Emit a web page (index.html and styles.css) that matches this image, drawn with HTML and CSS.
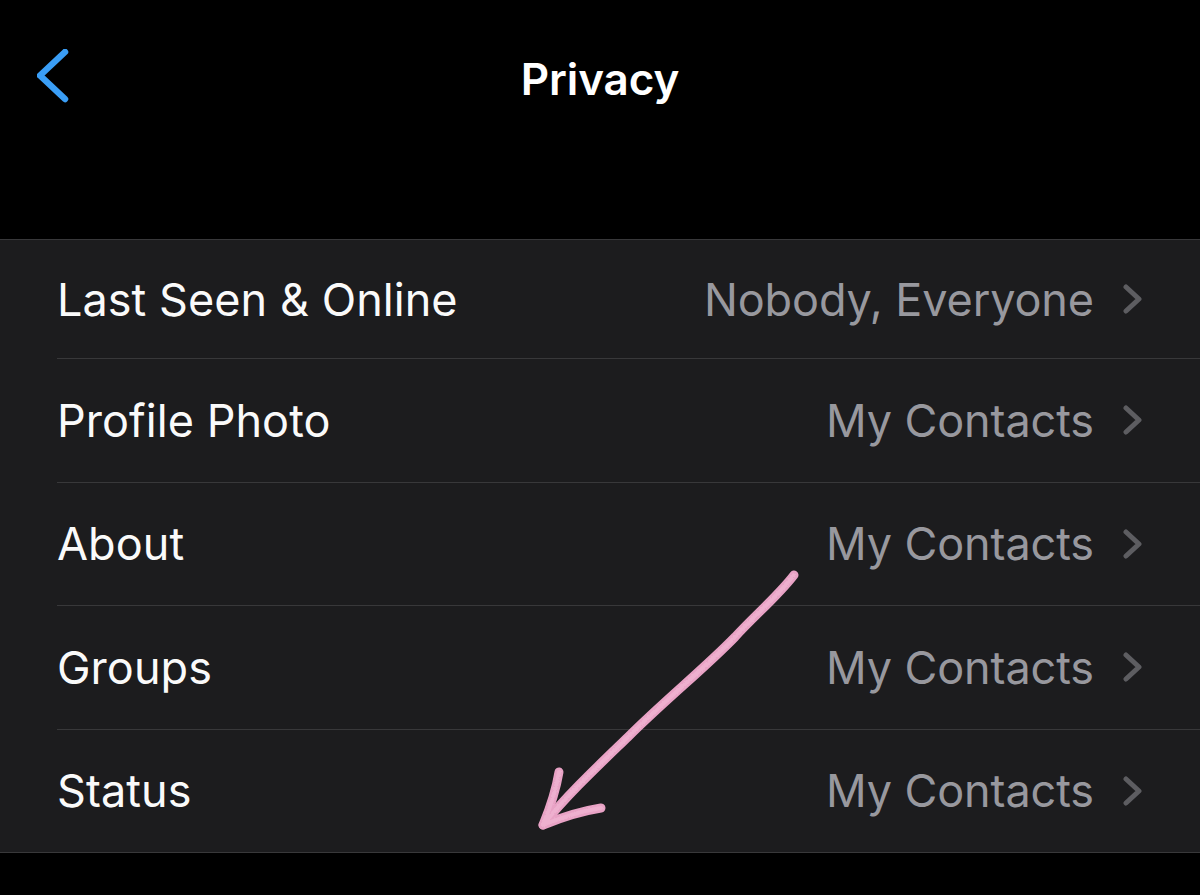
FILE: index.html
```html
<!DOCTYPE html>
<html lang="en">
<head>
<meta charset="utf-8">
<title>Privacy</title>
<link rel="stylesheet" href="styles.css">
</head>
<body>
<div class="screen">
  <header class="nav">
    <div class="nav-left">
      <svg class="back" width="40" height="60" viewBox="0 0 40 60" aria-hidden="true">
        <polyline points="28,3 3,26.5 28,50" fill="none" stroke="#3a9ef6" stroke-width="6.5" stroke-linecap="round" stroke-linejoin="round"/>
      </svg>
    </div>
    <h1 class="title">Privacy</h1>
    <div class="nav-right"></div>
  </header>
  <div class="gap"></div>
  <ul class="list">
    <li class="row first"><div class="row-inner"><span class="label">Last Seen &amp; Online</span><span class="value">Nobody, Everyone</span><svg class="chev" width="22" height="30" viewBox="0 0 22 30" aria-hidden="true"><polyline points="4,3 17,15 4,27" fill="none" stroke="#5d5d61" stroke-width="5" stroke-linecap="round" stroke-linejoin="round"/></svg></div></li>
    <li class="row"><div class="row-inner"><span class="label">Profile Photo</span><span class="value">My Contacts</span><svg class="chev" width="22" height="30" viewBox="0 0 22 30" aria-hidden="true"><polyline points="4,3 17,15 4,27" fill="none" stroke="#5d5d61" stroke-width="5" stroke-linecap="round" stroke-linejoin="round"/></svg></div></li>
    <li class="row"><div class="row-inner"><span class="label">About</span><span class="value">My Contacts</span><svg class="chev" width="22" height="30" viewBox="0 0 22 30" aria-hidden="true"><polyline points="4,3 17,15 4,27" fill="none" stroke="#5d5d61" stroke-width="5" stroke-linecap="round" stroke-linejoin="round"/></svg></div></li>
    <li class="row"><div class="row-inner"><span class="label">Groups</span><span class="value">My Contacts</span><svg class="chev" width="22" height="30" viewBox="0 0 22 30" aria-hidden="true"><polyline points="4,3 17,15 4,27" fill="none" stroke="#5d5d61" stroke-width="5" stroke-linecap="round" stroke-linejoin="round"/></svg></div></li>
    <li class="row last"><div class="row-inner"><span class="label">Status</span><span class="value">My Contacts</span><svg class="chev" width="22" height="30" viewBox="0 0 22 30" aria-hidden="true"><polyline points="4,3 17,15 4,27" fill="none" stroke="#5d5d61" stroke-width="5" stroke-linecap="round" stroke-linejoin="round"/></svg></div></li>
  </ul>
  <svg class="scribble" width="1200" height="895" viewBox="0 0 1200 895" aria-hidden="true">
    <defs>
      <filter id="rough" filterUnits="userSpaceOnUse" x="500" y="540" width="330" height="320">
        <feTurbulence type="fractalNoise" baseFrequency="0.7" numOctaves="2" seed="3" result="n"/>
        <feDisplacementMap in="SourceGraphic" in2="n" scale="3" xChannelSelector="R" yChannelSelector="G"/>
      </filter>
    </defs>
    <g fill="none" stroke="#e8a2c5" stroke-width="9" stroke-linecap="round" stroke-linejoin="round">
      <path d="M794 575 C778 596 755 615 735 637 C705 668 665 700 628 737 C598 766 568 794 543 825"/>
      <path d="M559 772 C556 790 550 808 543 825 C560 818 582 811 601 808"/>
    </g>
    <g filter="url(#rough)" fill="none" stroke="#f0b4d2" stroke-width="4" stroke-linecap="round" stroke-linejoin="round" opacity="0.8">
      <path d="M794 575 C778 596 755 615 735 637 C705 668 665 700 628 737 C598 766 568 794 543 825"/>
      <path d="M559 772 C556 790 550 808 543 825 C560 818 582 811 601 808"/>
    </g>
  </svg>
</div>
</body>
</html>
```

FILE: styles.css
```css
* {
  box-sizing: border-box;
}

html, body {
  margin: 0;
  padding: 0;
  background: #000;
}

body {
  font-family: "Inter", "Noto Sans", "Liberation Sans", sans-serif;
  color: #f5f5f7;
}

.screen {
  position: relative;
  width: 1200px;
  height: 895px;
  overflow: hidden;
  background: #000;
}

.nav {
  display: grid;
  grid-template-columns: 1fr auto 1fr;
  align-items: center;
  height: 158px;
}

.nav-left {
  display: flex;
  align-items: center;
  padding-left: 37px;
}

.back {
  display: block;
}

.title {
  margin: 0;
  font-size: 44px;
  font-weight: 600;
  letter-spacing: -0.1px;
  color: #fff;
}

.gap {
  height: 81px;
}

.list {
  list-style: none;
  margin: 0;
  padding: 0;
  background: #1c1c1e;
  border-top: 1px solid #38383a;
  border-bottom: 1px solid #38383a;
}

.row {
  padding-left: 57px;
}

.row-inner {
  display: flex;
  align-items: center;
  height: 123.5px;
  padding-right: 56px;
  border-bottom: 1px solid #38383a;
}

.row.first .row-inner {
  height: 119px;
}

.row.last .row-inner {
  border-bottom: none;
  height: 122.5px;
}

.label {
  flex: 1;
  font-size: 45px;
  font-weight: 400;
  color: #fafafa;
  letter-spacing: 0.05px;
}

.value {
  font-size: 45px;
  font-weight: 400;
  color: #98989e;
  letter-spacing: -0.1px;
}

.chev {
  display: block;
  margin-left: 28px;
}

.scribble {
  position: absolute;
  left: 0;
  top: 0;
  pointer-events: none;
}
```
